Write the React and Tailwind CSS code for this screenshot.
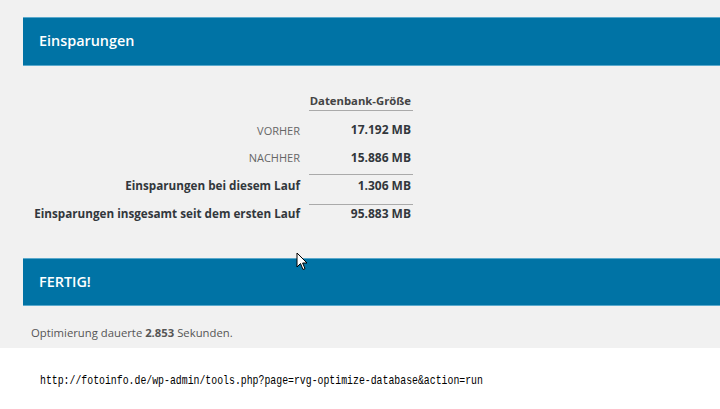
export default function App() {
  const font = { fontFamily: '"Open Sans", "Noto Sans", sans-serif' };
  return (
    <div className="relative w-[720px] h-[409px] bg-white overflow-hidden" style={font}>
      <div className="bg-[#f1f1f1] h-[348px] pt-[17px]">
        <div className="ml-[23px] h-[49px] bg-[#0073a5] border-y border-[#5aa9cc] flex items-center pl-[16px]">
          <span className="text-white text-[14.4px] font-semibold leading-none">Einsparungen</span>
        </div>
        <div className="ml-[31px] mt-[28px] flex flex-col text-[#32373c] leading-none">
          <div className="flex gap-x-[9px]">
            <div className="w-[269px]" />
            <div className="w-[104px] h-[17px] pt-[1px] pr-[2px] text-right font-bold text-[11.3px] text-[#444] border-b border-[#aaa]">Datenbank-Größe</div>
          </div>
          <div className="flex gap-x-[9px] h-[28px] mt-[5px] items-center">
            <div className="w-[269px] text-right text-[11px] text-[#666]">VORHER</div>
            <div className="w-[102px] text-right font-bold text-[12px]">17.192 MB</div>
          </div>
          <div className="flex gap-x-[9px] h-[27px] items-center">
            <div className="w-[269px] text-right text-[11px] text-[#666]">NACHHER</div>
            <div className="w-[102px] text-right font-bold text-[12px]">15.886 MB</div>
          </div>
          <div className="flex gap-x-[9px] mt-[3px]">
            <div className="w-[269px] h-[23px] flex items-center justify-end font-bold text-[11.7px]">Einsparungen bei diesem Lauf</div>
            <div className="w-[104px] h-[23px] flex items-center justify-end pr-[2px] font-bold text-[12px] border-t border-[#aaa]">1.306 MB</div>
          </div>
          <div className="flex gap-x-[9px] mt-[7px]">
            <div className="w-[269px] h-[19px] flex items-center justify-end font-bold text-[11.7px]">Einsparungen insgesamt seit dem ersten Lauf</div>
            <div className="w-[104px] h-[19px] flex items-center justify-end pr-[2px] font-bold text-[12px] border-t border-[#aaa]">95.883 MB</div>
          </div>
        </div>
        <div className="ml-[23px] mt-[35px] h-[48px] bg-[#0073a5] border-y border-[#5aa9cc] flex items-center pl-[16px]">
          <span className="text-white text-[14.4px] font-semibold leading-none">FERTIG!</span>
        </div>
        <div className="ml-[31px] mt-[21px] text-[11.3px] text-[#555] leading-none">
          Optimierung dauerte <span className="font-bold">2.853</span> Sekunden.
        </div>
      </div>
      <div className="pt-[26px] pl-[40px]">
        <div className="origin-left scale-x-[0.757] whitespace-nowrap text-[13px] leading-none text-black" style={{ fontFamily: '"Liberation Mono", monospace' }}>
          http://fotoinfo.de/wp-admin/tools.php?page=rvg-optimize-database&amp;action=run
        </div>
      </div>
      <svg className="absolute left-[296px] top-[252px]" width="12" height="19" viewBox="0 0 12 19">
        <path d="M1 1 L1 15 L4.5 11.5 L7 17.5 L9 16.6 L6.6 11 L11 11 Z" fill="white" stroke="black" strokeWidth="1" strokeLinejoin="round" />
      </svg>
    </div>
  );
}
